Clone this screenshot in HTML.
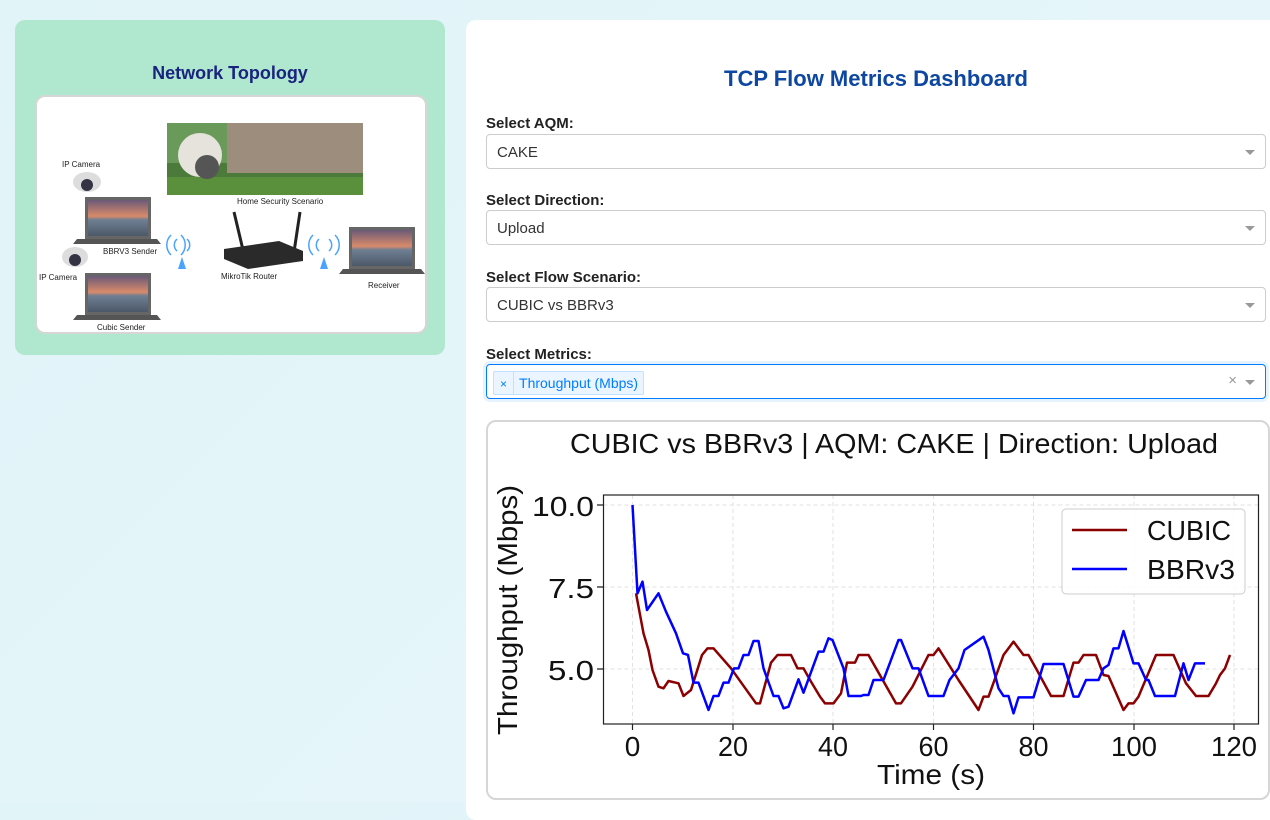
<!DOCTYPE html>
<html><head><meta charset="utf-8"><style>
*{box-sizing:border-box;margin:0;padding:0}
body{width:1270px;height:802px;overflow:hidden;background:linear-gradient(135deg,#e1f4f8,#e8f6fb);font-family:"Liberation Sans",sans-serif;position:relative}
.lc{position:absolute;left:15px;top:20px;width:430px;height:335px;background:#b0e8cf;border-radius:10px}
.lc h3{position:absolute;top:43px;width:100%;text-align:center;color:#1a237e;font-size:18px;font-weight:bold}
.img{position:absolute;left:20px;top:75px;width:392px;height:239px;background:#fff;border:2px solid #d6d6d6;border-radius:10px;overflow:hidden}
.rc{position:absolute;left:466px;top:20px;width:830px;height:800px;background:#fff;border-radius:10px}
.rc h2{position:absolute;top:46px;left:0;width:820px;text-align:center;color:#0d47a1;font-size:22px;font-weight:bold}
.lb{position:absolute;left:486px;font-size:15px;font-weight:bold;color:#222}
.dd{position:absolute;left:486px;width:780px;height:35px;border:1px solid #ccc;border-radius:4px;background:#fff;font-size:15px;color:#333;padding:9px 10px}
.dd:after{content:"";position:absolute;right:10px;top:15px;border:5px solid transparent;border-top:5px solid #999}
.tag{position:absolute;left:6px;top:6px;height:24px;border:1px solid #c2e0ff;background:#ebf5ff;color:#007eff;font-size:14px;border-radius:2px;display:flex}
.tag span{padding:3px 5px}
.tag span:first-child{border-right:1px solid #c2e0ff;font-size:12px;padding:5px 6px}
.chart{position:absolute;left:486px;top:420px;width:784px;height:380px;border:2px solid #d6d6d6;border-radius:10px;background:#fff;overflow:hidden}
.sm{font-size:8px;fill:#222}
</style></head><body>
<div class="lc"><h3>Network Topology</h3>
<div class="img"><svg width="392" height="239" viewBox="0 0 392 239">
<defs><linearGradient id="sc" x1="0" y1="0" x2="0" y2="1"><stop offset="0" stop-color="#6b5a78"/><stop offset=".45" stop-color="#d98a6a"/><stop offset=".55" stop-color="#6f7f93"/><stop offset="1" stop-color="#4b5868"/></linearGradient></defs>
<rect x="130" y="26" width="196" height="72" fill="#4c7a3a"/>
<rect x="190" y="26" width="136" height="50" fill="#9c8d7c"/>
<rect x="130" y="26" width="60" height="40" fill="#6a9a5a"/>
<rect x="130" y="80" width="196" height="18" fill="#5a8f3c"/>
<circle cx="163" cy="58" r="22" fill="#e6e3dc"/><circle cx="170" cy="70" r="12" fill="#555"/>
<text x="200" y="107" class="sm">Home Security Scenario</text>
<text x="25" y="70" class="sm">IP Camera</text>
<ellipse cx="50" cy="85" rx="14" ry="10" fill="#ddd"/><circle cx="50" cy="88" r="6" fill="#334"/>
<rect x="48" y="100" width="66" height="42" fill="#666"/><rect x="51" y="103" width="60" height="36" fill="url(#sc)"/>
<path d="M40 142h80l4 5H36z" fill="#555"/>
<text x="66" y="157" class="sm">BBRV3 Sender</text>
<text x="2" y="183" class="sm">IP Camera</text>
<ellipse cx="38" cy="160" rx="13" ry="10" fill="#ddd"/><circle cx="38" cy="163" r="6" fill="#334"/>
<rect x="48" y="176" width="66" height="42" fill="#666"/><rect x="51" y="179" width="60" height="36" fill="url(#sc)"/>
<path d="M40 218h80l4 5H36z" fill="#555"/>
<text x="60" y="233" class="sm">Cubic Sender</text>
<g fill="none" stroke="#4aa3ff" stroke-width="1.5"><path d="M142 142a8 8 0 0 1 0 12M136 138a14 14 0 0 1 0 20M132 142a8 8 0 0 0 0 12M126 138a14 14 0 0 0 0 20" transform="translate(8 0)"/>
<path d="M292 142a8 8 0 0 1 0 12M298 138a14 14 0 0 1 0 20M282 142a8 8 0 0 0 0 12M276 138a14 14 0 0 0 0 20"/></g>
<path d="M145 160l4 12h-8z" fill="#4aa3ff"/><path d="M287 160l4 12h-8z" fill="#4aa3ff"/>
<path d="M197 115l9 38M263 115l-6 40" stroke="#222" stroke-width="3"/>
<path d="M187 152l55-8 24 10v10l-55 8-24-10z" fill="#2a2a2a"/>
<text x="184" y="182" class="sm">MikroTik Router</text>
<rect x="312" y="130" width="66" height="42" fill="#666"/><rect x="315" y="133" width="60" height="36" fill="url(#sc)"/>
<path d="M306 172h78l4 5H302z" fill="#555"/>
<text x="331" y="191" class="sm">Receiver</text>
</svg></div></div>
<div class="rc"><h2>TCP Flow Metrics Dashboard</h2></div>
<div class="lb" style="top:115px">Select AQM:</div>
<div class="dd" style="top:134px">CAKE</div>
<div class="lb" style="top:192px">Select Direction:</div>
<div class="dd" style="top:210px">Upload</div>
<div class="lb" style="top:269px">Select Flow Scenario:</div>
<div class="dd" style="top:287px">CUBIC vs BBRv3</div>
<div class="lb" style="top:346px">Select Metrics:</div>
<div class="dd" style="top:364px;border-color:#007eff;box-shadow:0 0 0 3px #e6f3ff"><div class="tag"><span>×</span><span>Throughput (Mbps)</span></div><span style="position:absolute;right:28px;top:7px;color:#999;font-size:15px">×</span></div>
<div class="chart"></div>
<svg style="position:absolute;left:486px;top:420px" width="784" height="380" viewBox="0 0 784 380" font-family="Liberation Sans,sans-serif">
<text x="408" y="33" text-anchor="middle" font-size="28" fill="#111" textLength="648" lengthAdjust="spacingAndGlyphs">CUBIC vs BBRv3 | AQM: CAKE | Direction: Upload</text>
<g stroke="#e2e2e2" stroke-width="1" stroke-dasharray="4 3">
<path d="M117.5 85H772.5M117.5 167H772.5M117.5 249H772.5M146.5 75V304M247 75V304M347 75V304M447.5 75V304M547.5 75V304M648 75V304M748 75V304"/></g>
<g stroke="#222" stroke-width="1.2"><path d="M111 85h6.5M111 167h6.5M111 249h6.5M146.5 304v6M247 304v6M347 304v6M447.5 304v6M547.5 304v6M648 304v6M748 304v6"/></g>
<g font-size="28" fill="#111" text-anchor="end"><text x="108" y="96" textLength="62" lengthAdjust="spacingAndGlyphs">10.0</text><text x="108" y="178" textLength="46" lengthAdjust="spacingAndGlyphs">7.5</text><text x="108" y="260" textLength="46" lengthAdjust="spacingAndGlyphs">5.0</text></g>
<g font-size="28" fill="#111" text-anchor="middle"><text x="146.5" y="336">0</text><text x="247" y="336" textLength="30" lengthAdjust="spacingAndGlyphs">20</text><text x="347" y="336" textLength="30" lengthAdjust="spacingAndGlyphs">40</text><text x="447.5" y="336" textLength="30" lengthAdjust="spacingAndGlyphs">60</text><text x="547.5" y="336" textLength="30" lengthAdjust="spacingAndGlyphs">80</text><text x="648" y="336" textLength="46" lengthAdjust="spacingAndGlyphs">100</text><text x="748" y="336" textLength="46" lengthAdjust="spacingAndGlyphs">120</text></g>
<text x="445" y="364" font-size="28" text-anchor="middle" fill="#111" textLength="108" lengthAdjust="spacingAndGlyphs">Time (s)</text>
<text transform="translate(31 190) rotate(-90)" font-size="28" text-anchor="middle" fill="#111" textLength="250" lengthAdjust="spacingAndGlyphs">Throughput (Mbps)</text>
<g transform="scale(0.5 0.33333)">
<polyline fill="none" stroke="#8b0000" stroke-width="2.5" vector-effect="non-scaling-stroke" stroke-linejoin="round" points="300,520 315,640 325,690 333,750 345,800 355,805 365,783 385,790 395,828 410,810 432,705 443,685 455,685 490,745 540,850 548,850 570,728 583,705 610,705 623,745 635,745 650,785 668,830 678,850 695,850 710,820 722,728 738,728 745,705 765,705 820,850 830,850 853,800 885,705 895,705 905,685 945,780 985,870 995,830 1005,830 1035,705 1055,665 1075,705 1085,705 1100,745 1130,828 1155,828 1175,728 1185,728 1195,705 1220,705 1235,765 1245,768 1275,870 1285,850 1295,850 1305,830 1340,705 1375,705 1400,790 1420,828 1445,828 1460,790 1468,765 1478,745 1488,705"/>
<polyline fill="none" stroke="#0000ff" stroke-width="2.5" vector-effect="non-scaling-stroke" stroke-linejoin="round" points="293,255 303,520 313,485 322,570 345,520 360,575 380,640 394,700 404,705 415,788 425,788 445,870 455,828 465,828 475,788 485,788 496,745 505,745 515,705 525,705 535,663 545,663 555,745 575,828 585,828 595,865 605,860 625,778 635,818 665,695 675,695 685,655 693,660 715,745 725,828 750,828 755,825 765,825 775,780 795,780 825,660 830,660 853,745 865,745 885,828 915,828 927,780 945,745 957,690 995,650 1005,690 1025,805 1035,828 1045,828 1055,880 1065,832 1095,832 1115,732 1155,732 1175,830 1185,830 1200,780 1225,780 1235,745 1245,735 1255,685 1265,685 1275,633 1295,730 1305,730 1320,780 1325,780 1338,828 1378,828 1395,730 1405,780 1418,730 1438,730"/>
</g>
<rect x="117.5" y="75" width="655" height="229" fill="none" stroke="#222" stroke-width="1.2"/>
<rect x="576" y="89" width="183" height="85" rx="4" fill="#fff" fill-opacity=".85" stroke="#ccc" stroke-width="1"/>
<path d="M586 110h55" stroke="#8b0000" stroke-width="2.5"/><path d="M586 149h55" stroke="#0000ff" stroke-width="2.5"/>
<text x="661" y="120" font-size="28" fill="#111" textLength="84" lengthAdjust="spacingAndGlyphs">CUBIC</text><text x="661" y="159" font-size="28" fill="#111" textLength="88" lengthAdjust="spacingAndGlyphs">BBRv3</text>
</svg>
</body></html>
